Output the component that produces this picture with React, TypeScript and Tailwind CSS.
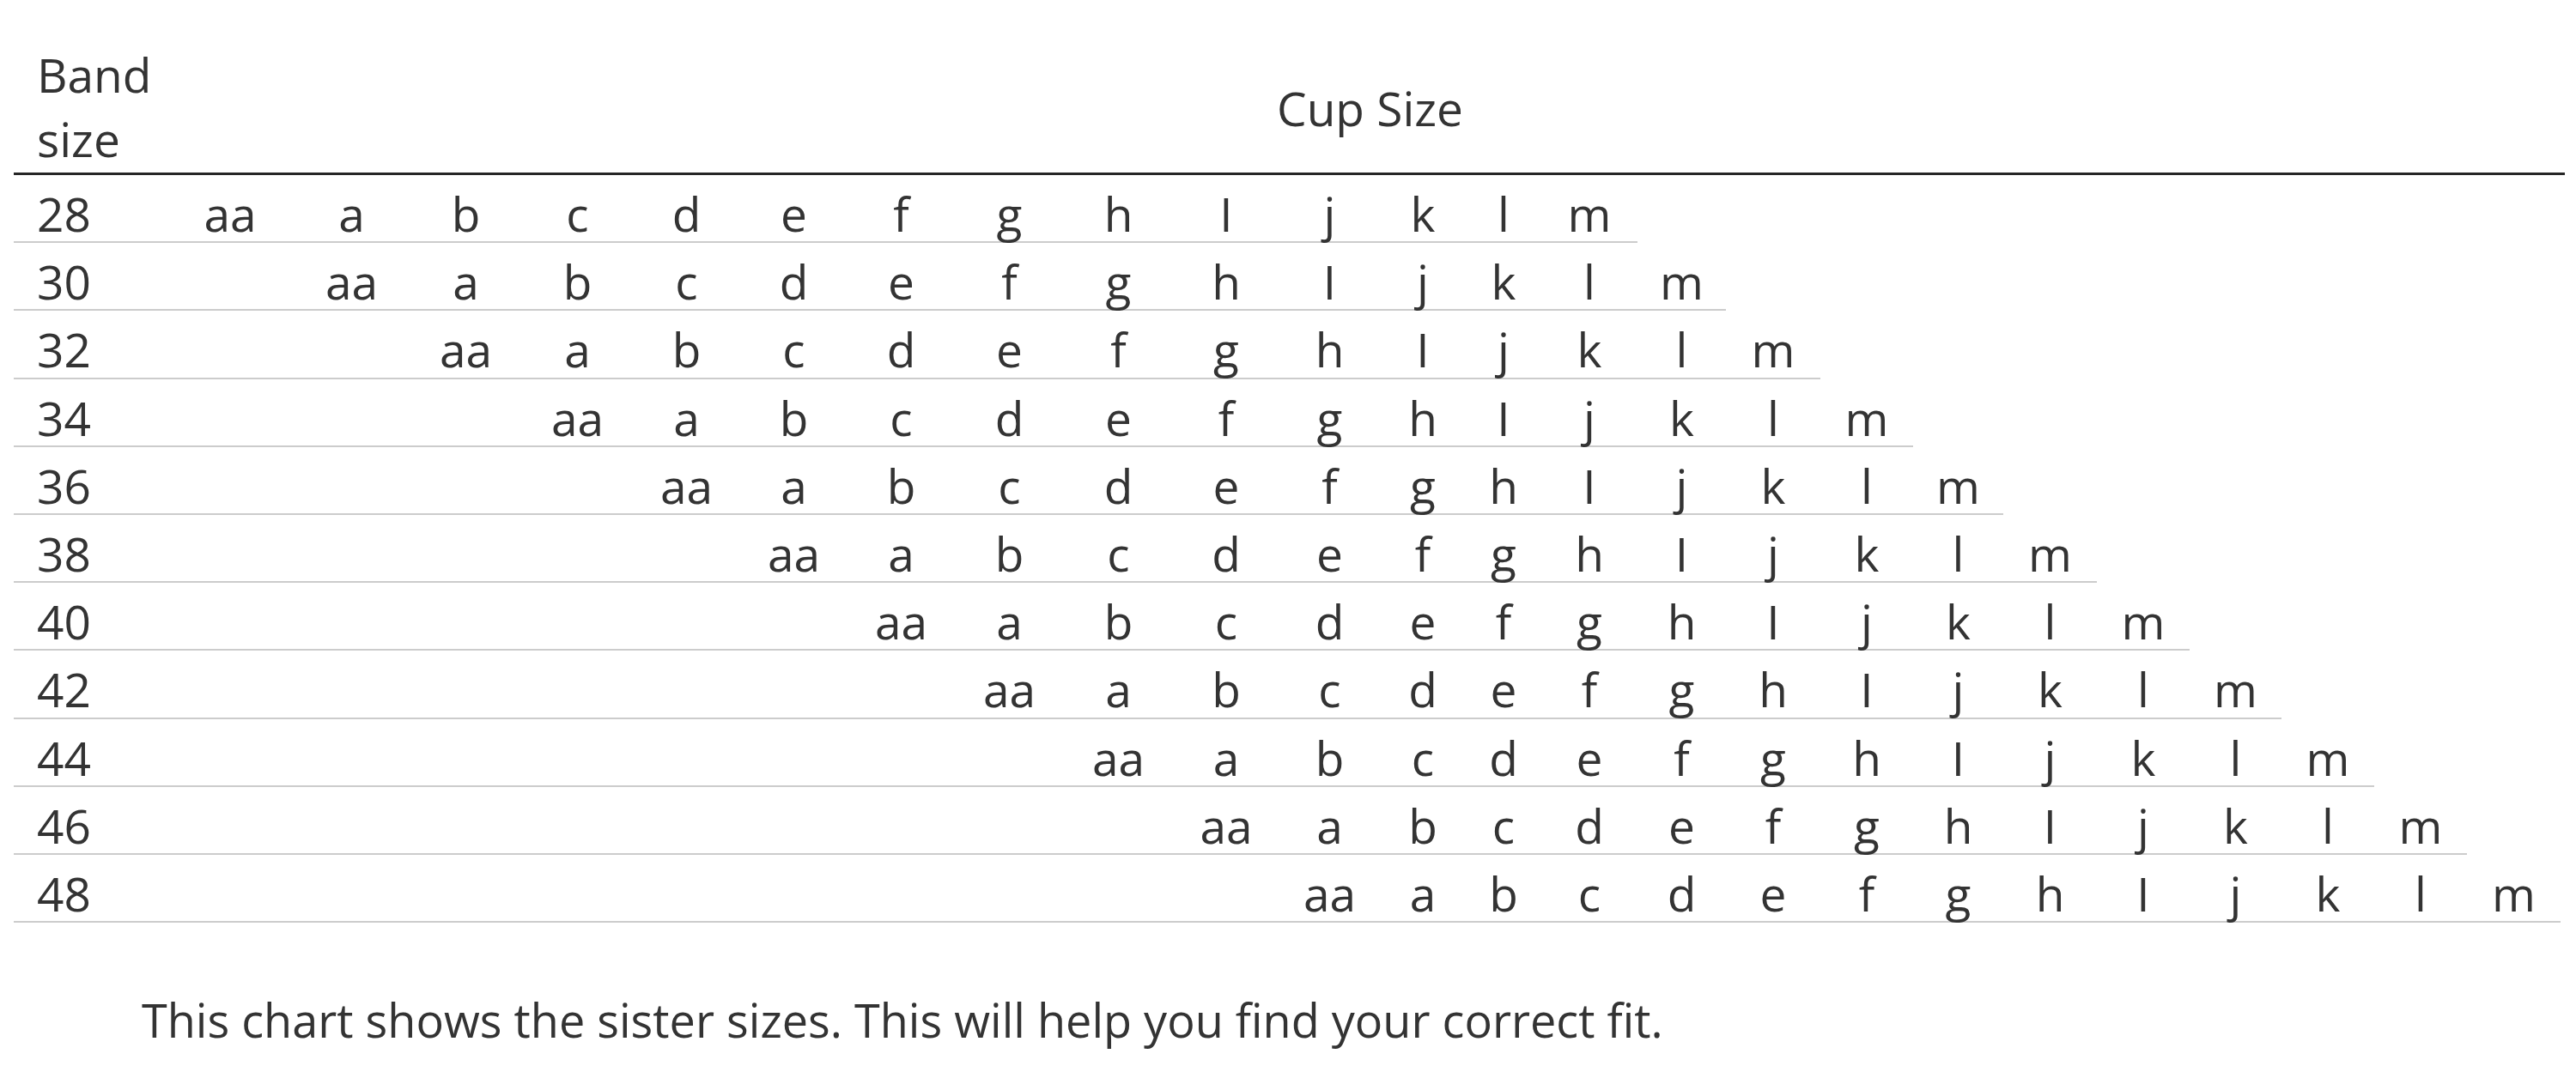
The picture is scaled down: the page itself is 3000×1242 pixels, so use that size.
import React from "react";

const CUPS = ["aa", "a", "b", "c", "d", "e", "f", "g", "h", "I", "j", "k", "l", "m"];
const BANDS = ["28", "30", "32", "34", "36", "38", "40", "42", "44", "46", "48"];

const COLS =
  "grid-cols-[178px_148px_135px_131px_129px_125px_125px_125px_127px_127px_124px_117px_100px_88px_112px_103px_110px_108px_105px_109px_108px_107px_108px_108px_109px]";

function Row({ band, shift }: { band: string; shift: number }) {
  const cells: React.ReactNode[] = [];
  cells.push(
    <div key="band" className="h-[79.2px] border-b-2 border-[#cccccc] pt-[12px] pl-[27px] leading-[66px] text-left">
      {band}
    </div>
  );
  for (let k = 0; k < shift; k++) {
    cells.push(<div key={`e${k}`} className="h-[79.2px] border-b-2 border-[#cccccc]" />);
  }
  CUPS.forEach((c, idx) => {
    cells.push(
      <div key={`c${idx}`} className="h-[79.2px] border-b-2 border-[#cccccc] pt-[12px] leading-[66px] text-center">
        {c}
      </div>
    );
  });
  return <div className={`grid ${COLS}`}>{cells}</div>;
}

export default function App() {
  return (
    <div className="w-[3000px] h-[1242px] bg-white text-[#333333] font-['Open_Sans',sans-serif] text-[55px] overflow-hidden">
      <div className="pt-[49px] pl-[16px]">
        <div className="w-[2971px]">
          <div className="grid grid-cols-[178px_1fr] items-center border-b-[3px] border-[#262626]">
            <div className="pl-[27px] pb-[2px] leading-[75px]">
              Band
              <br />
              size
            </div>
            <div className="text-center leading-[75px] pl-[10px]">Cup Size</div>
          </div>
          {BANDS.map((b, i) => (
            <Row key={b} band={b} shift={i} />
          ))}
        </div>
      </div>
      <p className="mt-[76px] pl-[165px] text-[54px] leading-[75px]">
        This chart shows the sister sizes. This will help you find your correct fit.
      </p>
    </div>
  );
}
